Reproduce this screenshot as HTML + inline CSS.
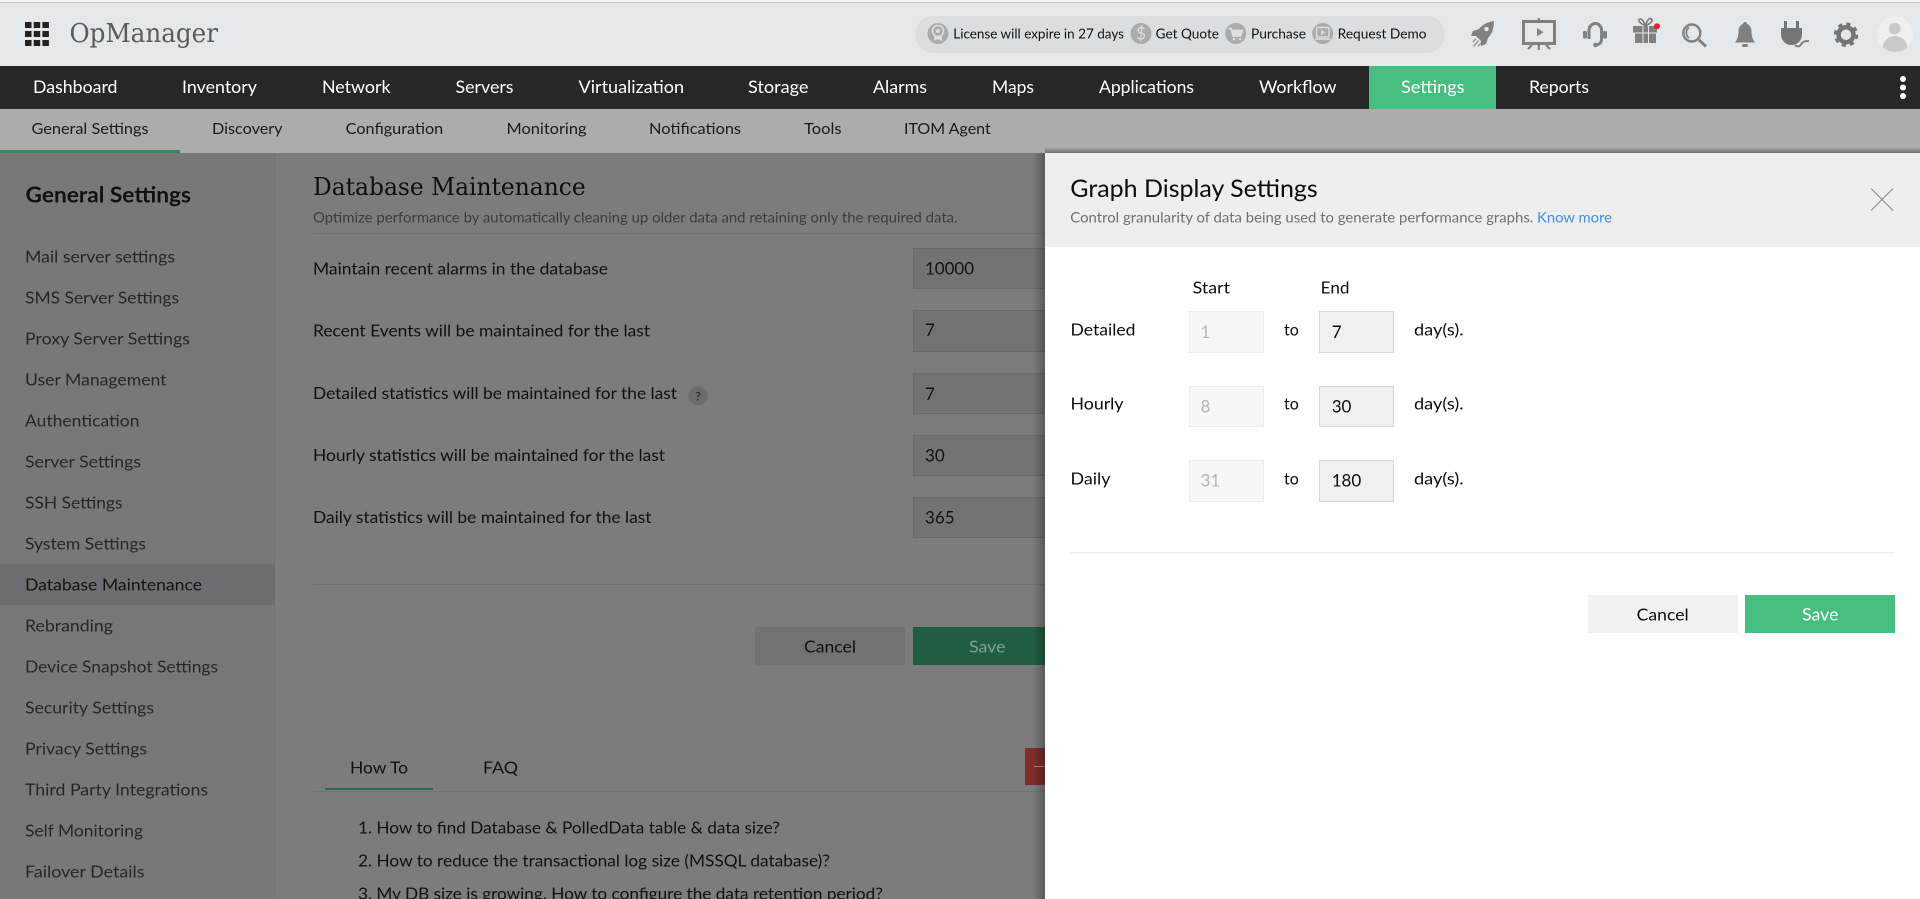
<!DOCTYPE html>
<html lang="en">
<head>
<meta charset="utf-8">
<title>OpManager - Graph Display Settings</title>
<style>
html,body{margin:0;padding:0;width:1920px;height:899px;overflow:hidden;background:#7c7c7c}
svg{display:block}
text{font-family:"Lato","Carlito","Liberation Sans",sans-serif;white-space:pre}
.slab{font-family:"DejaVu Serif","Liberation Serif",serif}
.nav{font-size:17px;fill:#fff}
.sub{font-size:15px;fill:#1a1a1a}
.side{font-size:16px;fill:#262626}
.lbl{font-size:16.5px;fill:#101010}
.pl{font-size:16px;fill:#0c0c0c}
.top{font-size:13.5px;fill:#111}
</style>
</head>
<body>
<svg width="1920" height="899" viewBox="0 0 1920 899" xmlns="http://www.w3.org/2000/svg">
<defs>
<clipPath id="av"><circle cx="1895" cy="34" r="18"/></clipPath>
<linearGradient id="sl" x1="0" x2="1" y1="0" y2="0"><stop offset="0" stop-color="#000" stop-opacity="0"/><stop offset="1" stop-color="#000" stop-opacity=".28"/></linearGradient>
<linearGradient id="st" x1="0" x2="0" y1="0" y2="1"><stop offset="0" stop-color="#000" stop-opacity="0"/><stop offset="1" stop-color="#000" stop-opacity=".35"/></linearGradient>
</defs>

<!-- header -->
<rect width="1920" height="66" fill="#e6e7e9"/>
<rect width="1920" height="2" fill="#f4f4f4"/>
<rect y="2" width="1920" height="1" fill="#c6c6c6"/>
<g fill="#222">
<rect x="25" y="22" width="6.500" height="6"/><rect x="33.700" y="22" width="6.500" height="6"/><rect x="42.400" y="22" width="6.500" height="6"/>
<rect x="25" y="31" width="6.500" height="6"/><rect x="33.700" y="31" width="6.500" height="6"/><rect x="42.400" y="31" width="6.500" height="6"/>
<rect x="25" y="40" width="6.500" height="6"/><rect x="33.700" y="40" width="6.500" height="6"/><rect x="42.400" y="40" width="6.500" height="6"/>
</g>
<text class="slab" x="69.500" y="42" font-size="26.500" fill="#5a5a5a" textLength="148.500" lengthAdjust="spacingAndGlyphs">OpManager</text>

<!-- pill -->
<rect x="915" y="16" width="530" height="37" rx="18.500" fill="#dcddde"/>
<circle cx="938" cy="33.500" r="10.500" fill="#ababab"/>
<circle cx="938" cy="31" r="5.500" fill="none" stroke="#dedede" stroke-width="1.600"/><circle cx="938" cy="31" r="2" fill="#dedede"/>
<path d="M934 36v5l2.500-1.500h3l2.500 1.500v-5" fill="#dedede"/>
<text class="top" x="953.300" y="38.500" textLength="170.700" lengthAdjust="spacingAndGlyphs">License will expire in 27 days</text>
<circle cx="1141" cy="33.500" r="10.500" fill="#ababab"/>
<text x="1141" y="39.500" font-size="17" fill="#dedede" text-anchor="middle">$</text>
<text class="top" x="1155.700" y="38.500" textLength="63.300" lengthAdjust="spacingAndGlyphs">Get Quote</text>
<circle cx="1235.700" cy="33.500" r="10.500" fill="#ababab"/>
<path d="M1228.500 28.500h2.500l2 7.500h7.500l2-5.500h-10.500" fill="none" stroke="#dedede" stroke-width="1.700"/><path d="M1232.500 31h9.500l-1.500 4.500h-7z" fill="#dedede"/>
<circle cx="1234" cy="39" r="1.300" fill="#dedede"/><circle cx="1240" cy="39" r="1.300" fill="#dedede"/>
<text class="top" x="1251" y="38.500" textLength="55" lengthAdjust="spacingAndGlyphs">Purchase</text>
<circle cx="1322.700" cy="33.500" r="10.500" fill="#ababab"/>
<rect x="1316.500" y="27.500" width="12.500" height="9.500" rx="1" fill="none" stroke="#dedede" stroke-width="1.500"/>
<path d="M1321 29.800l4.500 2.700l-4.500 2.700z" fill="#dedede"/><path d="M1315 39h15.500" stroke="#dedede" stroke-width="1.500"/>
<text class="top" x="1337.700" y="38.500" textLength="88.800" lengthAdjust="spacingAndGlyphs">Request Demo</text>

<!-- right icons -->
<g fill="#808080">
<path d="M1494 21C1487 22 1482 25 1479 29L1473 31L1471 36L1476 36L1481 41L1481 46L1486 44L1488 38C1492 34 1494 28 1494 21Z"/>
<circle cx="1486.500" cy="29" r="2.300" fill="#e6e7e9"/>
<path d="M1476 38.500l-3 3.500M1478.500 40.500l-5 6M1481 43l-3 3.500" stroke="#9a9a9a" stroke-width="1.500" fill="none"/>
</g>
<g stroke="#808080" fill="none">
<rect x="1523.500" y="21.500" width="31" height="22" stroke-width="3"/>
<path d="M1538.800 18v3M1538.800 44v6M1532 45l-4 4M1546 45l4 4" stroke-width="2.200"/>
</g>
<path d="M1537 28l6.500 4.200l-6.500 4.200z" fill="#808080"/>
<g stroke="#808080" fill="none" stroke-width="3">
<path d="M1589 39V30.500a6.300 7 0 0 1 12.600 0V39"/>
<path d="M1601.500 39c0 4-2 5.500-5.500 6"/>
</g>
<rect x="1583" y="31" width="4" height="7.500" rx="1.500" fill="#808080"/><rect x="1603" y="31" width="4" height="7.500" rx="1.500" fill="#808080"/>
<circle cx="1595.500" cy="45" r="2.300" fill="#808080"/>

<g fill="#808080">
<rect x="1633" y="26" width="24" height="6.500"/>
<rect x="1635" y="33.500" width="21" height="9.500"/>
<rect x="1642.500" y="26" width="1" height="17" fill="#e6e7e9"/><rect x="1648" y="26" width="1" height="17" fill="#e6e7e9"/>
</g>
<path d="M1645.500 25.500c-3-1-6.500-2.500-6.500-5c0-2.500 3.500-2.500 6.500 5c2-6 4-8 6-6.500c2 2-1.500 5-6 6.500" fill="none" stroke="#808080" stroke-width="1.700"/>
<circle cx="1657" cy="26.300" r="3" fill="#f01f2f"/>
<circle cx="1691.800" cy="33" r="8.500" fill="none" stroke="#808080" stroke-width="2.400"/>
<path d="M1689 27.500c-3.500 2.500-3.500 8 0 10.500" fill="none" stroke="#808080" stroke-width="1.800"/>
<path d="M1699 40l7 6.500" stroke="#808080" stroke-width="3"/>
<path d="M1745 22c1.500 0 2 1 2 2c3 1 4.500 4 4.500 8c0 4 1 7 3.500 10.500h-20c2.500-3.500 3.500-6.500 3.500-10.500c0-4 1.500-7 4.500-8c0-1 .5-2 2-2z" fill="#808080"/>
<rect x="1742" y="44" width="6" height="3" rx="1.500" fill="#808080"/>
<path d="M1784 21h3v7h-3zM1796 21h3v7h-3zM1781 28h21v6c0 7-5 11-10.500 11c-5.500 0-10.500-4-10.500-11z" fill="#757575"/>
<path d="M1795 45c3 3 5 1 7-2c2-2 4-2 7-2" fill="none" stroke="#757575" stroke-width="1.800"/>
<circle cx="1846" cy="34.700" r="7.500" fill="none" stroke="#757575" stroke-width="4.500"/>
<circle cx="1846" cy="34.700" r="10.800" fill="none" stroke="#757575" stroke-width="2.800" stroke-dasharray="4.240 4.240"/>
<circle cx="1895" cy="34" r="18" fill="#efefef"/>
<g clip-path="url(#av)" fill="#c9c9c9"><circle cx="1894.700" cy="28.500" r="5.800"/><ellipse cx="1895" cy="48.500" rx="12.500" ry="12.500"/></g>

<!-- nav -->
<rect y="66" width="1920" height="43" fill="#272727"/>
<rect x="1369" y="66" width="127" height="43" fill="#48bd80"/>
<text class="nav" x="33" y="93" textLength="84.500" lengthAdjust="spacingAndGlyphs">Dashboard</text>
<text class="nav" x="182" y="93" textLength="75" lengthAdjust="spacingAndGlyphs">Inventory</text>
<text class="nav" x="322" y="93" textLength="68.500" lengthAdjust="spacingAndGlyphs">Network</text>
<text class="nav" x="455.500" y="93" textLength="58" lengthAdjust="spacingAndGlyphs">Servers</text>
<text class="nav" x="578.500" y="93" textLength="105.500" lengthAdjust="spacingAndGlyphs">Virtualization</text>
<text class="nav" x="748" y="93" textLength="60.500" lengthAdjust="spacingAndGlyphs">Storage</text>
<text class="nav" x="873" y="93" textLength="54" lengthAdjust="spacingAndGlyphs">Alarms</text>
<text class="nav" x="992" y="93" textLength="42" lengthAdjust="spacingAndGlyphs">Maps</text>
<text class="nav" x="1099" y="93" textLength="95" lengthAdjust="spacingAndGlyphs">Applications</text>
<text class="nav" x="1259" y="93" textLength="77.500" lengthAdjust="spacingAndGlyphs">Workflow</text>
<text class="nav" x="1401" y="93" textLength="63.500" lengthAdjust="spacingAndGlyphs">Settings</text>
<text class="nav" x="1529" y="93" textLength="60" lengthAdjust="spacingAndGlyphs">Reports</text>
<g fill="#fff"><circle cx="1903" cy="79" r="3"/><circle cx="1903" cy="87.500" r="3"/><circle cx="1903" cy="96" r="3"/></g>

<!-- sub nav -->
<rect y="109" width="1920" height="44" fill="#acacac"/>
<rect y="150" width="180" height="3" fill="#2f8a5e"/>
<text class="sub" x="31.500" y="134" textLength="117" lengthAdjust="spacingAndGlyphs">General Settings</text>
<text class="sub" x="212" y="134" textLength="70.500" lengthAdjust="spacingAndGlyphs">Discovery</text>
<text class="sub" x="345.700" y="134" textLength="97.500" lengthAdjust="spacingAndGlyphs">Configuration</text>
<text class="sub" x="506.500" y="134" textLength="80" lengthAdjust="spacingAndGlyphs">Monitoring</text>
<text class="sub" x="649" y="134" textLength="92" lengthAdjust="spacingAndGlyphs">Notifications</text>
<text class="sub" x="804" y="134" textLength="37.500" lengthAdjust="spacingAndGlyphs">Tools</text>
<text class="sub" x="904" y="134" textLength="86.700" lengthAdjust="spacingAndGlyphs">ITOM Agent</text>

<!-- body -->
<rect y="153" width="1920" height="746" fill="#7c7c7c"/>
<rect y="153" width="274" height="746" fill="#787878"/>
<rect x="274" y="153" width="1" height="746" fill="#747474"/>
<rect y="564" width="275" height="41" fill="#6e6e70"/>
<text x="25.500" y="202.500" font-size="22" font-weight="bold" fill="#101010" textLength="165.500" lengthAdjust="spacingAndGlyphs">General Settings</text>
<text class="side" x="25" y="262.500" textLength="150" lengthAdjust="spacingAndGlyphs">Mail server settings</text>
<text class="side" x="25" y="303.500" textLength="154" lengthAdjust="spacingAndGlyphs">SMS Server Settings</text>
<text class="side" x="25" y="344.500" textLength="165" lengthAdjust="spacingAndGlyphs">Proxy Server Settings</text>
<text class="side" x="25" y="385.500" textLength="141.500" lengthAdjust="spacingAndGlyphs">User Management</text>
<text class="side" x="25" y="426.500" textLength="114.500" lengthAdjust="spacingAndGlyphs">Authentication</text>
<text class="side" x="25" y="467.500" textLength="116" lengthAdjust="spacingAndGlyphs">Server Settings</text>
<text class="side" x="25" y="508.500" textLength="97.500" lengthAdjust="spacingAndGlyphs">SSH Settings</text>
<text class="side" x="25" y="549.500" textLength="121" lengthAdjust="spacingAndGlyphs">System Settings</text>
<text class="side" x="25" y="590.500" textLength="177" lengthAdjust="spacingAndGlyphs" style="fill:#141414">Database Maintenance</text>
<text class="side" x="25" y="631.500" textLength="88" lengthAdjust="spacingAndGlyphs">Rebranding</text>
<text class="side" x="25" y="672.500" textLength="193" lengthAdjust="spacingAndGlyphs">Device Snapshot Settings</text>
<text class="side" x="25" y="713.500" textLength="129" lengthAdjust="spacingAndGlyphs">Security Settings</text>
<text class="side" x="25" y="754.500" textLength="122" lengthAdjust="spacingAndGlyphs">Privacy Settings</text>
<text class="side" x="25" y="795.500" textLength="183" lengthAdjust="spacingAndGlyphs">Third Party Integrations</text>
<text class="side" x="25" y="836.500" textLength="118" lengthAdjust="spacingAndGlyphs">Self Monitoring</text>
<text class="side" x="25" y="877.500" textLength="119.500" lengthAdjust="spacingAndGlyphs">Failover Details</text>

<!-- main -->
<text class="slab" x="313" y="195" font-size="24" fill="#0e0e0e" textLength="272.700" lengthAdjust="spacingAndGlyphs">Database Maintenance</text>
<text x="313" y="222.700" font-size="14.500" fill="#3c3c3c" textLength="644.600" lengthAdjust="spacingAndGlyphs">Optimize performance by automatically cleaning up older data and retaining only the required data.</text>
<rect x="313" y="233" width="732" height="1" fill="#717171"/>
<text class="lbl" x="313" y="274.500" textLength="295" lengthAdjust="spacingAndGlyphs">Maintain recent alarms in the database</text>
<text class="lbl" x="313" y="336.500" textLength="337" lengthAdjust="spacingAndGlyphs">Recent Events will be maintained for the last</text>
<text class="lbl" x="313" y="399" textLength="364" lengthAdjust="spacingAndGlyphs">Detailed statistics will be maintained for the last</text>
<text class="lbl" x="313" y="461" textLength="352" lengthAdjust="spacingAndGlyphs">Hourly statistics will be maintained for the last</text>
<text class="lbl" x="313" y="523" textLength="338.500" lengthAdjust="spacingAndGlyphs">Daily statistics will be maintained for the last</text>
<circle cx="698" cy="395.700" r="9.500" fill="#6c6c6c" stroke="#757575"/>
<text x="698" y="400.500" font-size="12" fill="#1f1f1f" text-anchor="middle">?</text>
<g fill="#737373" stroke="#696969">
<rect x="913.500" y="248.500" width="140" height="40"/>
<rect x="913.500" y="310.500" width="140" height="41"/>
<rect x="913.500" y="373.500" width="140" height="40"/>
<rect x="913.500" y="435.500" width="140" height="40"/>
<rect x="913.500" y="497.500" width="140" height="40"/>
</g>
<g font-size="17" fill="#121212">
<text x="925" y="274.500" textLength="49" lengthAdjust="spacingAndGlyphs">10000</text>
<text x="925" y="336">7</text>
<text x="925" y="400">7</text>
<text x="925" y="461.500">30</text>
<text x="925" y="523.500">365</text>
</g>
<rect x="313" y="584" width="732" height="1" fill="#707070"/>
<rect x="755" y="627" width="150" height="38" fill="#727272"/>
<rect x="913" y="627" width="132" height="38" fill="#215e41"/>
<text class="lbl" x="804" y="652.500" textLength="52" lengthAdjust="spacingAndGlyphs">Cancel</text>
<text x="969" y="652.500" font-size="16.500" fill="#7fa28f" textLength="36.500" lengthAdjust="spacingAndGlyphs">Save</text>
<text class="lbl" x="350" y="773.500" textLength="58" lengthAdjust="spacingAndGlyphs">How To</text>
<text class="lbl" x="483" y="773.500" textLength="35" lengthAdjust="spacingAndGlyphs">FAQ</text>
<rect x="325" y="788" width="108" height="2" fill="#24724c"/>
<rect x="313" y="791" width="732" height="1" fill="#727272"/>
<rect x="1025" y="748" width="20" height="37" fill="#7e2d2d"/>
<rect x="1034" y="766" width="11" height="1" fill="#a98181"/>
<text class="lbl" x="358" y="833.500" textLength="422" lengthAdjust="spacingAndGlyphs">1. How to find Database &amp; PolledData table &amp; data size?</text>
<text class="lbl" x="358" y="866.500" textLength="472" lengthAdjust="spacingAndGlyphs">2. How to reduce the transactional log size (MSSQL database)?</text>
<text class="lbl" x="358" y="899.500" textLength="525" lengthAdjust="spacingAndGlyphs">3. My DB size is growing. How to configure the data retention period?</text>

<!-- panel shadow -->
<rect x="1033" y="153" width="12" height="746" fill="url(#sl)"/>
<rect x="1045" y="147" width="875" height="6" fill="url(#st)"/>

<!-- panel -->
<rect x="1045" y="153" width="875" height="746" fill="#fff"/>
<rect x="1045" y="153" width="875" height="94" fill="#eeeeee"/>
<text x="1070.300" y="197" font-size="24" fill="#0c0c0c" textLength="247.400" lengthAdjust="spacingAndGlyphs">Graph Display Settings</text>
<text x="1070.300" y="222.500" font-size="14.500" fill="#707070" textLength="463" lengthAdjust="spacingAndGlyphs">Control granularity of data being used to generate performance graphs.</text>
<text x="1537" y="222.500" font-size="14.500" fill="#418fde" textLength="75" lengthAdjust="spacingAndGlyphs">Know more</text>
<path d="M1871 188.500l22 22M1893 188.500l-22 22" stroke="#8a8a8a" stroke-width="1.100" fill="none"/>

<text class="pl" x="1192.700" y="293.500" textLength="37.300" lengthAdjust="spacingAndGlyphs">Start</text>
<text class="pl" x="1320.700" y="293.500" textLength="28.800" lengthAdjust="spacingAndGlyphs">End</text>

<text class="pl" x="1070.500" y="335.500" textLength="65" lengthAdjust="spacingAndGlyphs">Detailed</text>
<text class="pl" x="1070.500" y="409.500" textLength="53" lengthAdjust="spacingAndGlyphs">Hourly</text>
<text class="pl" x="1070.500" y="484.500" textLength="40" lengthAdjust="spacingAndGlyphs">Daily</text>

<g fill="#f7f7f7" stroke="#ececec">
<rect x="1189.500" y="311.500" width="74" height="41"/>
<rect x="1189.500" y="386.500" width="74" height="40"/>
<rect x="1189.500" y="460.500" width="74" height="41"/>
</g>
<g fill="#f0f0f0" stroke="#d9d9d9">
<rect x="1319.500" y="311.500" width="74" height="41"/>
<rect x="1319.500" y="386.500" width="74" height="40"/>
<rect x="1319.500" y="460.500" width="74" height="41"/>
</g>
<g font-size="17" fill="#b5b5b5">
<text x="1200.500" y="338">1</text>
<text x="1200.500" y="412.500">8</text>
<text x="1200.500" y="486.500">31</text>
</g>
<g font-size="17" fill="#0c0c0c">
<text x="1331.700" y="338">7</text>
<text x="1331.700" y="412.500">30</text>
<text x="1331.700" y="486.500">180</text>
</g>
<g font-size="16" fill="#0c0c0c">
<text x="1284" y="335.500">to</text><text x="1284" y="409.500">to</text><text x="1284" y="484.500">to</text>
<text x="1414" y="335.500" textLength="49.500" lengthAdjust="spacingAndGlyphs">day(s).</text>
<text x="1414" y="409.500" textLength="49.500" lengthAdjust="spacingAndGlyphs">day(s).</text>
<text x="1414" y="484.500" textLength="49.500" lengthAdjust="spacingAndGlyphs">day(s).</text>
</g>
<rect x="1070" y="552" width="825" height="1.500" fill="#efefef"/>
<rect x="1588" y="595" width="150" height="38" fill="#f2f2f2"/>
<rect x="1745" y="595" width="150" height="38" fill="#48bd80"/>
<text class="pl" x="1636.700" y="620.500" font-size="17" textLength="52" lengthAdjust="spacingAndGlyphs">Cancel</text>
<text x="1802" y="620.500" font-size="17" fill="#fff" textLength="36.500" lengthAdjust="spacingAndGlyphs">Save</text>
</svg>
</body>
</html>
